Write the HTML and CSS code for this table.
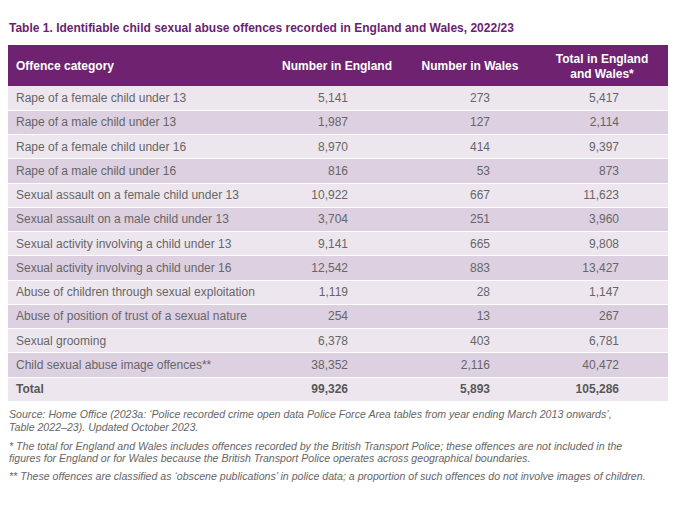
FILE: index.html
```html
<!DOCTYPE html>
<html lang="en">
<head>
<meta charset="utf-8">
<title>Table 1</title>
<link rel="stylesheet" href="styles.css">
</head>
<body>
<div class="page">
  <h1 class="title">Table 1. Identifiable child sexual abuse offences recorded in England and Wales, 2022/23</h1>
  <table class="data">
    <thead>
      <tr>
        <th class="c-cat">Offence category</th>
        <th class="c-eng">Number in England</th>
        <th class="c-wal">Number in Wales</th>
        <th class="c-tot">Total in England<br>and Wales*</th>
      </tr>
    </thead>
    <tbody>
      <tr><td class="c-cat">Rape of a female child under 13</td><td class="c-eng">5,141</td><td class="c-wal">273</td><td class="c-tot">5,417</td></tr>
      <tr><td class="c-cat">Rape of a male child under 13</td><td class="c-eng">1,987</td><td class="c-wal">127</td><td class="c-tot">2,114</td></tr>
      <tr><td class="c-cat">Rape of a female child under 16</td><td class="c-eng">8,970</td><td class="c-wal">414</td><td class="c-tot">9,397</td></tr>
      <tr><td class="c-cat">Rape of a male child under 16</td><td class="c-eng">816</td><td class="c-wal">53</td><td class="c-tot">873</td></tr>
      <tr><td class="c-cat">Sexual assault on a female child under 13</td><td class="c-eng">10,922</td><td class="c-wal">667</td><td class="c-tot">11,623</td></tr>
      <tr><td class="c-cat">Sexual assault on a male child under 13</td><td class="c-eng">3,704</td><td class="c-wal">251</td><td class="c-tot">3,960</td></tr>
      <tr><td class="c-cat">Sexual activity involving a child under 13</td><td class="c-eng">9,141</td><td class="c-wal">665</td><td class="c-tot">9,808</td></tr>
      <tr><td class="c-cat">Sexual activity involving a child under 16</td><td class="c-eng">12,542</td><td class="c-wal">883</td><td class="c-tot">13,427</td></tr>
      <tr><td class="c-cat">Abuse of children through sexual exploitation</td><td class="c-eng">1,119</td><td class="c-wal">28</td><td class="c-tot">1,147</td></tr>
      <tr><td class="c-cat">Abuse of position of trust of a sexual nature</td><td class="c-eng">254</td><td class="c-wal">13</td><td class="c-tot">267</td></tr>
      <tr><td class="c-cat">Sexual grooming</td><td class="c-eng">6,378</td><td class="c-wal">403</td><td class="c-tot">6,781</td></tr>
      <tr><td class="c-cat">Child sexual abuse image offences**</td><td class="c-eng">38,352</td><td class="c-wal">2,116</td><td class="c-tot">40,472</td></tr>
      <tr class="total"><td class="c-cat">Total</td><td class="c-eng">99,326</td><td class="c-wal">5,893</td><td class="c-tot">105,286</td></tr>
    </tbody>
  </table>
  <div class="notes">
    <p>Source: Home Office (2023a: ‘Police recorded crime open data Police Force Area tables from year ending March 2013 onwards’,<br>Table 2022–23). Updated October 2023.</p>
    <p>* The total for England and Wales includes offences recorded by the British Transport Police; these offences are not included in the<br>figures for England or for Wales because the British Transport Police operates across geographical boundaries.</p>
    <p>** These offences are classified as ‘obscene publications’ in police data; a proportion of such offences do not involve images of children.</p>
  </div>
</div>
</body>
</html>
```

FILE: styles.css
```css
html, body {
  margin: 0;
  padding: 0;
  background: #ffffff;
}

body {
  font-family: "Liberation Sans", Arial, Helvetica, sans-serif;
  color: #666666;
}

.page {
  padding: 21px 22px 0 8px;
}

.title {
  margin: 0 0 10px 1px;
  font-size: 12px;
  line-height: 14px;
  font-weight: bold;
  color: #6b1f6e;
}

.data {
  width: 660px;
  border-collapse: collapse;
  table-layout: fixed;
  font-size: 12px;
}

.data th,
.data td {
  box-sizing: border-box;
}

.data th {
  background: #6f2270;
  color: #ffffff;
  font-weight: bold;
  height: 41px;
  padding: 2px 0 0 0;
  line-height: 15px;
  text-align: center;
  vertical-align: middle;
}

.data th.c-cat {
  text-align: left;
  padding-left: 8px;
}

.data td {
  height: 24.25px;
  padding: 0;
  line-height: 14px;
  vertical-align: middle;
  border-bottom: 1px solid #ffffff;
}

.data tbody tr:nth-child(odd) td {
  background: #ede6ef;
}

.data tbody tr:nth-child(even) td {
  background: #ddd0e1;
}

.data tbody tr:last-child td {
  border-bottom: none;
}

.c-cat { width: 262px; }
.c-eng { width: 134px; }
.c-wal { width: 132px; }
.c-tot { width: 132px; }

.data td.c-cat {
  padding-left: 8px;
  text-align: left;
}

.data td.c-eng {
  text-align: right;
  padding-right: 56px;
}

.data td.c-wal {
  text-align: right;
  padding-right: 46px;
}

.data td.c-tot {
  text-align: right;
  padding-right: 49px;
}

.data tr.total td {
  font-weight: bold;
  color: #585858;
}

.notes {
  margin-top: 7px;
  padding-left: 1px;
  font-size: 10.6px;
  font-style: italic;
  line-height: 13px;
  color: #666666;
}

.notes p {
  margin: 0 0 6px 0;
}

.notes p:nth-child(2) {
  line-height: 12px;
}
```
